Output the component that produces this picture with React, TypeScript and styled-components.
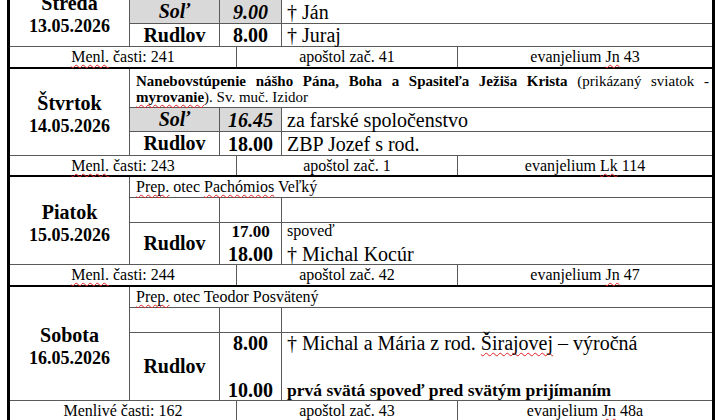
import React from 'react';
import styled, { createGlobalStyle } from 'styled-components';

const LINE = '#5a5a5a';
const SHADE = '#d9d9d9';

const GlobalStyle = createGlobalStyle`
	html,
	body {
		margin: 0;
		padding: 0;
		background: #ffffff;
	}

	body {
		font-family: 'Liberation Serif', 'Times New Roman', serif;
		color: #000000;
		overflow: hidden;
	}
`;

const Sheet = styled.div`
	width: 702px;
	margin: -26px 0 0 7px;
	border: 3px solid #000000;
	border-bottom: none;
`;

const DayBlock = styled.section`
	border-bottom: 2px solid #000000;
`;

const DayGrid = styled.div<{ $rows: string }>`
	display: grid;
	grid-template-columns: 119px 89px 61px 1fr;
	grid-template-rows: ${(p) => p.$rows};
	gap: 1px;
	background: ${LINE};
`;

const DayCell = styled.div`
	grid-column: 1;
	grid-row: 1 / -1;
	background: #ffffff;
	display: flex;
	flex-direction: column;
	align-items: center;
	justify-content: center;
	padding-top: 6px;
	font-weight: bold;

	strong {
		font-size: 20px;
		line-height: 22px;
	}

	span {
		font-size: 18px;
		line-height: 24px;
	}
`;

const NoteCell = styled.div<{ $pad?: string }>`
	grid-column: 2 / 5;
	background: #ffffff;
	padding: ${(p) => p.$pad || '0 4px 0 6px'};
	font-size: 16px;
	line-height: 20px;
`;

const NoteLine = styled.div<{ $justify?: boolean }>`
	font-size: 15px;
	line-height: 15.5px;
	white-space: nowrap;
	text-align: ${(p) => (p.$justify ? 'justify' : 'left')};
	text-align-last: ${(p) => (p.$justify ? 'justify' : 'auto')};
`;

const PlaceCell = styled.div<{ $shaded?: boolean }>`
	background: ${(p) => (p.$shaded ? SHADE : '#ffffff')};
	display: flex;
	align-items: center;
	justify-content: center;
	font-size: 20px;
	font-weight: bold;
	font-style: ${(p) => (p.$shaded ? 'italic' : 'normal')};
`;

const TimeCell = styled.div<{ $shaded?: boolean; $spread?: boolean }>`
	background: ${(p) => (p.$shaded ? SHADE : '#ffffff')};
	display: flex;
	flex-direction: column;
	align-items: center;
	justify-content: ${(p) => (p.$spread ? 'space-between' : 'center')};
	font-size: 20px;
	line-height: 20px;
	font-weight: bold;
	font-style: ${(p) => (p.$shaded ? 'italic' : 'normal')};
`;

const SmallTime = styled.div`
	font-size: 17px;
	line-height: 18px;
`;

const TextCell = styled.div<{ $spread?: boolean }>`
	background: #ffffff;
	display: flex;
	flex-direction: column;
	justify-content: ${(p) => (p.$spread ? 'space-between' : 'center')};
	padding-left: 5px;
	font-size: 20px;
	line-height: 20px;
	white-space: nowrap;
`;

const SmallText = styled.div`
	font-size: 16px;
	line-height: 16px;
`;

const BoldLine = styled.div`
	font-size: 17.5px;
	font-weight: bold;
`;

const EmptyCell = styled.div`
	background: #ffffff;
`;

const Footer = styled.div<{ $h: number }>`
	display: grid;
	grid-template-columns: 226px 220px 1fr;
	height: ${(p) => p.$h}px;
	gap: 1px;
	background: ${LINE};
	border-top: 1px solid ${LINE};
`;

const FooterCell = styled.div`
	background: #ffffff;
	display: flex;
	align-items: center;
	justify-content: center;
	font-size: 16px;
	white-space: nowrap;
`;

const Squiggle = styled.span`
	text-decoration: underline wavy #e02020;
	text-decoration-thickness: 1px;
	text-underline-offset: 2px;
	text-decoration-skip-ink: none;
`;

const App = (): React.FunctionComponentElement<JSX.Element> => {
	return (
		<>
			<GlobalStyle />
			<Sheet>
				<DayBlock>
					<DayGrid $rows='22px 23px 22px'>
						<DayCell>
							<strong>Streda</strong>
							<span>13.05.2026</span>
						</DayCell>
						<NoteCell></NoteCell>
						<PlaceCell $shaded>Soľ</PlaceCell>
						<TimeCell $shaded>9.00</TimeCell>
						<TextCell>† Ján</TextCell>
						<PlaceCell>Rudlov</PlaceCell>
						<TimeCell>8.00</TimeCell>
						<TextCell>† Juraj</TextCell>
					</DayGrid>
					<Footer $h={20}>
						<FooterCell>
							<Squiggle>Menl.</Squiggle>&nbsp;časti: 241
						</FooterCell>
						<FooterCell>apoštol zač. 41</FooterCell>
						<FooterCell>
							evanjelium&nbsp;<Squiggle>Jn</Squiggle>&nbsp;43
						</FooterCell>
					</Footer>
				</DayBlock>

				<DayBlock>
					<DayGrid $rows='38px 23px 23px'>
						<DayCell>
							<strong>Štvrtok</strong>
							<span>14.05.2026</span>
						</DayCell>
						<NoteCell $pad='5px 3px 0 6px'>
							<NoteLine $justify>
								<b>Nanebovstúpenie nášho Pána, Boha a Spasiteľa Ježiša Krista</b> (prikázaný sviatok -
							</NoteLine>
							<NoteLine>
								<b>
									<Squiggle>myrovanie</Squiggle>
								</b>
								). Sv. muč. Izidor
							</NoteLine>
						</NoteCell>
						<PlaceCell $shaded>Soľ</PlaceCell>
						<TimeCell $shaded>16.45</TimeCell>
						<TextCell>za farské spoločenstvo</TextCell>
						<PlaceCell>Rudlov</PlaceCell>
						<TimeCell>18.00</TimeCell>
						<TextCell>ZBP Jozef s rod.</TextCell>
					</DayGrid>
					<Footer $h={19}>
						<FooterCell>
							<Squiggle>Menl.</Squiggle>&nbsp;časti: 243
						</FooterCell>
						<FooterCell>apoštol zač. 1</FooterCell>
						<FooterCell>
							evanjelium&nbsp;<Squiggle>Lk</Squiggle>&nbsp;114
						</FooterCell>
					</Footer>
				</DayBlock>

				<DayBlock>
					<DayGrid $rows='20px 24px 41px'>
						<DayCell>
							<strong>Piatok</strong>
							<span>15.05.2026</span>
						</DayCell>
						<NoteCell>
							<Squiggle>Prep.</Squiggle> otec <Squiggle>Pachómios</Squiggle> Veľký
						</NoteCell>
						<EmptyCell />
						<EmptyCell />
						<EmptyCell />
						<PlaceCell>Rudlov</PlaceCell>
						<TimeCell $spread>
							<SmallTime>17.00</SmallTime>
							<div>18.00</div>
						</TimeCell>
						<TextCell $spread>
							<SmallText>spoveď</SmallText>
							<div>† Michal Kocúr</div>
						</TextCell>
					</DayGrid>
					<Footer $h={20}>
						<FooterCell>
							<Squiggle>Menl.</Squiggle>&nbsp;časti: 244
						</FooterCell>
						<FooterCell>apoštol zač. 42</FooterCell>
						<FooterCell>
							evanjelium&nbsp;<Squiggle>Jn</Squiggle>&nbsp;47
						</FooterCell>
					</Footer>
				</DayBlock>

				<DayBlock>
					<DayGrid $rows='20px 24px 67px'>
						<DayCell>
							<strong>Sobota</strong>
							<span>16.05.2026</span>
						</DayCell>
						<NoteCell>
							<Squiggle>Prep.</Squiggle> otec Teodor Posvätený
						</NoteCell>
						<EmptyCell />
						<EmptyCell />
						<EmptyCell />
						<PlaceCell>Rudlov</PlaceCell>
						<TimeCell $spread>
							<div>8.00</div>
							<div>10.00</div>
						</TimeCell>
						<TextCell $spread>
							<div>
								† Michal a Mária z rod. <Squiggle>Širajovej</Squiggle> – výročná
							</div>
							<BoldLine>prvá svätá spoveď pred svätým prijímaním</BoldLine>
						</TextCell>
					</DayGrid>
					<Footer $h={20}>
						<FooterCell>Menlivé časti: 162</FooterCell>
						<FooterCell>apoštol zač. 43</FooterCell>
						<FooterCell>
							evanjelium&nbsp;<Squiggle>Jn</Squiggle>&nbsp;48a
						</FooterCell>
					</Footer>
				</DayBlock>
			</Sheet>
		</>
	);
};

export default App;
